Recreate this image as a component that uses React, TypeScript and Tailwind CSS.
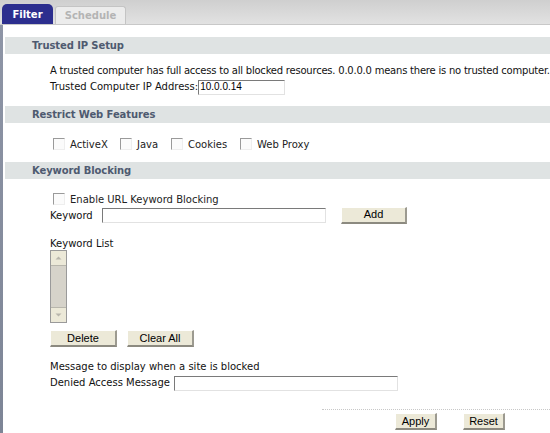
import React from "react";

const V = { fontFamily: '"DejaVu Sans", Verdana, sans-serif' } as const;
const A = { fontFamily: '"Liberation Sans", Arial, sans-serif' } as const;

function Header({ title }: { title: string }) {
  return (
    <div className="h-[17px] bg-[#dfe3e3] flex items-center pl-[27px] shrink-0">
      <span className="text-[10px] font-bold text-[#4e5a70] tracking-[-0.1px]" style={V}>{title}</span>
    </div>
  );
}

function Check({ label, w }: { label: string; w?: string }) {
  return (
    <div className={`flex items-center h-[16px] ${w ?? ""}`}>
      <div className="w-[12px] h-[12px] border-t border-l border-t-[#9a9a9a] border-l-[#9a9a9a] border-b border-r border-b-[#eeeeee] border-r-[#eeeeee] bg-[#fbfbfb] shrink-0" />
      <span className="ml-[5px] text-[10px] text-[#222] whitespace-nowrap" style={V}>{label}</span>
    </div>
  );
}

function Input({ w, value }: { w: string; value?: string }) {
  return (
    <div className={`${w} h-[15px] border-t border-l border-t-[#7a7a7a] border-l-[#7a7a7a] border-b border-r border-b-[#e2e2e2] border-r-[#e2e2e2] bg-white flex items-center pl-[1px] shrink-0`}>
      {value && <span className="text-[10px] text-black" style={A}>{value}</span>}
    </div>
  );
}

function Btn({ label, w }: { label: string; w: string }) {
  return (
    <div className={`${w} h-[17px] bg-[#ece9d8] border-t border-l border-t-[#ffffff] border-l-[#ffffff] border-b-2 border-r-2 border-b-[#8c8a80] border-r-[#9c9a90] flex items-center justify-center shrink-0`}>
      <span className="text-[11px] text-black" style={A}>{label}</span>
    </div>
  );
}

export default function App() {
  return (
    <div className="w-[550px] h-[433px] overflow-hidden bg-white flex flex-col" style={V}>
      {/* tab bar */}
      <div className="h-[25px] bg-gradient-to-b from-[#cfcfcf] to-[#e2e2e2] border-b border-[#c8c8c8] flex items-end pl-[2px] gap-[2px] shrink-0">
        <div className="w-[51px] h-[20px] bg-[#2c2e8e] rounded-t-[5px] flex items-center justify-center">
          <span className="text-[10px] font-bold text-white" style={V}>Filter</span>
        </div>
        <div className="w-[71px] h-[18px] bg-[#ececec] border border-b-0 border-[#c4c4c4] rounded-t-[3px] flex items-center justify-center">
          <span className="text-[10px] font-bold text-[#b4b4b4]" style={V}>Schedule</span>
        </div>
      </div>
      <div className="flex flex-1 min-h-0">
        <div className="w-[3px] bg-gradient-to-b from-[#8e95a6] to-[#7d8596] shrink-0" />
        <div className="flex-1 pl-[2px] pt-[12px] flex flex-col">
          <Header title="Trusted IP Setup" />
          <div className="pl-[45px] pt-[9px] pb-[11px] text-[10px] text-[#111] leading-[16px]" style={V}>
            <div className="whitespace-nowrap h-[16px] tracking-[-0.22px]">A trusted computer has full access to all blocked resources. 0.0.0.0 means there is no trusted computer.</div>
            <div className="flex items-center h-[16px]">
              <span className="whitespace-nowrap">Trusted Computer IP Address:</span>
              <Input w="w-[87px]" value="10.0.0.14" />
            </div>
          </div>
          <Header title="Restrict Web Features" />
          <div className="pl-[48px] pt-[13px] pb-[10px] flex">
            <Check label="ActiveX" w="w-[67px]" />
            <Check label="Java" w="w-[51px]" />
            <Check label="Cookies" w="w-[69px]" />
            <Check label="Web Proxy" />
          </div>
          <Header title="Keyword Blocking" />
          <div className="pl-[48px] pt-[12px]">
            <Check label="Enable URL Keyword Blocking" />
          </div>
          <div className="pl-[45px] flex items-center h-[16px]">
            <span className="text-[10px] text-[#111] w-[52px]" style={V}>Keyword</span>
            <Input w="w-[224px]" />
            <div className="w-[15px]" />
            <Btn label="Add" w="w-[66px]" />
          </div>
          <div className="pl-[45px] mt-[13px] h-[14px] flex items-center text-[10px] text-[#111]" style={V}>Keyword List</div>
          <div className="pl-[45px]">
            <div className="w-[17px] h-[73px] border border-[#9a9a9a] bg-[#d6d3ca] flex flex-col justify-between">
              <div className="h-[15px] bg-[#ece9d8] border-b border-[#b8b6ac] flex items-center justify-center">
                <svg width="7" height="4" viewBox="0 0 7 4"><path d="M0.5 3.5 L3.5 0.5 L6.5 3.5 Z" fill="#b8b6ac" /></svg>
              </div>
              <div className="h-[15px] bg-[#ece9d8] border-t border-[#b8b6ac] flex items-center justify-center">
                <svg width="7" height="4" viewBox="0 0 7 4"><path d="M0.5 0.5 L3.5 3.5 L6.5 0.5 Z" fill="#b8b6ac" /></svg>
              </div>
            </div>
          </div>
          <div className="pl-[45px] mt-[7px] flex gap-[10px]">
            <Btn label="Delete" w="w-[67px]" />
            <Btn label="Clear All" w="w-[67px]" />
          </div>
          <div className="pl-[45px] mt-[12px] text-[10px] text-[#111] leading-[16px]" style={V}>
            <div className="h-[16px] whitespace-nowrap">Message to display when a site is blocked</div>
            <div className="flex items-center h-[16px]">
              <span className="w-[124px] whitespace-nowrap shrink-0">Denied Access Message</span>
              <Input w="w-[224px]" />
            </div>
          </div>
          <div className="mt-[18px] ml-[317px] border-t border-dotted border-[#c8c8c8]" />
          <div className="pl-[390px] mt-[3px] flex gap-[26px]">
            <Btn label="Apply" w="w-[42px]" />
            <Btn label="Reset" w="w-[42px]" />
          </div>
        </div>
      </div>
    </div>
  );
}
